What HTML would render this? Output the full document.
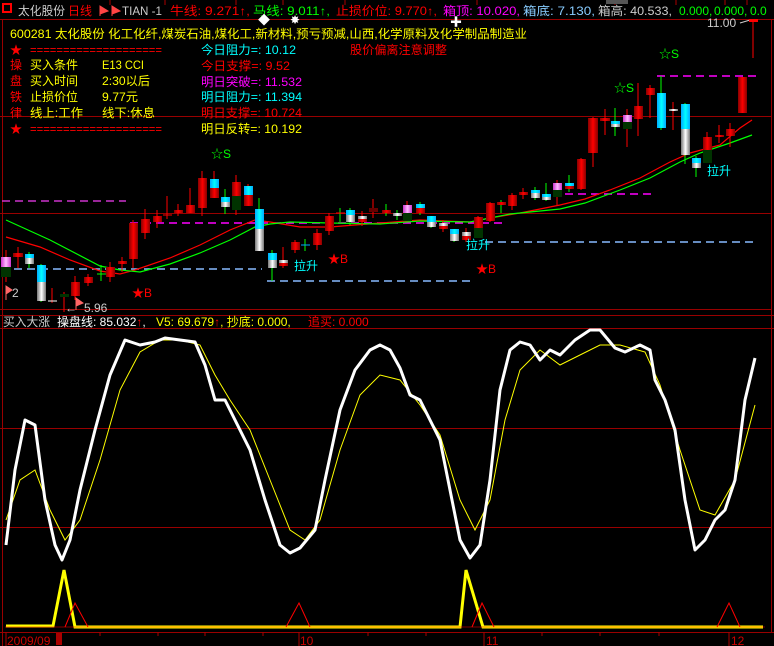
<!DOCTYPE html>
<html><head><meta charset="utf-8"><style>
html,body{margin:0;padding:0;background:#000;width:774px;height:646px;overflow:hidden}
svg{display:block}
text{font-family:"Liberation Sans","Noto Sans CJK SC",sans-serif;font-size:12px}
</style></head><body>
<svg width="774" height="646" viewBox="0 0 774 646" xmlns="http://www.w3.org/2000/svg">
<defs>
<linearGradient id="r" x1="0" x2="1"><stop offset="0" stop-color="#800"/><stop offset=".5" stop-color="#f00"/><stop offset="1" stop-color="#800"/></linearGradient>
<linearGradient id="c" x1="0" x2="1"><stop offset="0" stop-color="#0af"/><stop offset=".5" stop-color="#0ff"/><stop offset="1" stop-color="#0af"/></linearGradient>
<linearGradient id="w" x1="0" x2="1"><stop offset="0" stop-color="#777"/><stop offset=".5" stop-color="#fff"/><stop offset="1" stop-color="#777"/></linearGradient>
<linearGradient id="p" x1="0" x2="1"><stop offset="0" stop-color="#c3c"/><stop offset=".5" stop-color="#fbf"/><stop offset="1" stop-color="#c3c"/></linearGradient>
</defs>
<rect width="774" height="646" fill="#000"/>
<g stroke="#a00" stroke-width="1">
<line x1="110" y1="0" x2="110" y2="5"/><line x1="165" y1="0" x2="165" y2="5"/><line x1="236" y1="0" x2="236" y2="5"/><line x1="283" y1="0" x2="283" y2="5"/><line x1="345" y1="0" x2="345" y2="5"/><line x1="477" y1="0" x2="477" y2="5"/><line x1="615" y1="0" x2="615" y2="5"/><line x1="676" y1="0" x2="676" y2="5"/><line x1="725" y1="0" x2="725" y2="5"/><line x1="747" y1="0" x2="747" y2="5"/>
</g>
<rect x="606" y="0" width="22" height="4" fill="#555"/>
<g stroke="#900" stroke-width="1">
<line x1="0" y1="19.5" x2="774" y2="19.5"/>
<line x1="0" y1="116.5" x2="771" y2="116.5"/>
<line x1="0" y1="213.5" x2="771" y2="213.5"/>
<line x1="0" y1="309.5" x2="771" y2="309.5"/>
<line x1="0" y1="315.5" x2="774" y2="315.5"/>
<line x1="0" y1="328.5" x2="774" y2="328.5"/>
<line x1="0" y1="428.5" x2="771" y2="428.5"/>
<line x1="0" y1="527.5" x2="771" y2="527.5"/>
<line x1="0" y1="632.5" x2="774" y2="632.5"/>
<line x1="2.5" y1="19" x2="2.5" y2="646"/>
<line x1="771.5" y1="19" x2="771.5" y2="632"/>
</g>
<rect x="3" y="4" width="8" height="8" fill="none" stroke="#f00" stroke-width="2"/>
<text x="18" y="15" font-size="13" fill="#ccc" textLength="47" lengthAdjust="spacingAndGlyphs">太化股份</text>
<text x="68" y="15" font-size="13" fill="#f00" textLength="24" lengthAdjust="spacingAndGlyphs">日线</text>
<path d="M100 6 L100 16 M100 6 L108 11 L100 14Z M112 6 L112 16 M112 6 L120 11 L112 14Z" fill="#f44" stroke="#f44"/>
<text x="122" y="15" fill="#ccc" font-size="13" textLength="40" lengthAdjust="spacingAndGlyphs">TIAN -1</text>
<text x="170" y="15" font-size="13" fill="#f00" textLength="80" lengthAdjust="spacingAndGlyphs">牛线: 9.271↑,</text>
<text x="253" y="15" font-size="13" fill="#0f0" textLength="77" lengthAdjust="spacingAndGlyphs">马线: 9.011↑,</text>
<text x="336" y="15" font-size="13" fill="#f00" textLength="101" lengthAdjust="spacingAndGlyphs">止损价位: 9.770↑,</text>
<text x="443" y="15" font-size="13" fill="#f0f" textLength="77" lengthAdjust="spacingAndGlyphs">箱顶: 10.020,</text>
<text x="523" y="15" font-size="13" fill="#8cf" textLength="72" lengthAdjust="spacingAndGlyphs">箱底: 7.130,</text>
<text x="598" y="15" font-size="13" fill="#ccc" textLength="74" lengthAdjust="spacingAndGlyphs">箱高: 40.533,</text>
<text x="679" y="15" font-size="13" fill="#0f0">0.000,</text>
<text x="714" y="15" font-size="13" fill="#0f0">0.000,</text>
<text x="750" y="15" font-size="13" fill="#0f0">0.0</text>
<text x="258" y="24" fill="#fff" font-size="10">◆</text><text x="290" y="24" fill="#fff" font-size="10">✸</text><text x="450" y="26" fill="#fff" font-size="12">✚</text>
<text x="10" y="38" fill="#ff0" font-size="13" textLength="517" lengthAdjust="spacingAndGlyphs">600281 太化股份 化工化纤,煤炭石油,煤化工,新材料,预亏预减,山西,化学原料及化学制品制造业</text>
<text x="10" y="54" fill="#f00">★</text><text x="30" y="54" fill="#f00" textLength="132" lengthAdjust="spacingAndGlyphs">====================</text>
<text x="10" y="69" fill="#f00" font-size="13">操</text><text x="30" y="69" fill="#ff0" font-size="13">买入条件</text><text x="102" y="69" fill="#ff0" font-size="13" textLength="42" lengthAdjust="spacingAndGlyphs">E13 CCI</text>
<text x="10" y="85" fill="#f00" font-size="13">盘</text><text x="30" y="85" fill="#ff0" font-size="13">买入时间</text><text x="102" y="85" fill="#ff0" font-size="13" textLength="48" lengthAdjust="spacingAndGlyphs">2:30以后</text>
<text x="10" y="101" fill="#f00" font-size="13">铁</text><text x="30" y="101" fill="#ff0" font-size="13">止损价位</text><text x="102" y="101" fill="#ff0" font-size="13" textLength="36" lengthAdjust="spacingAndGlyphs">9.77元</text>
<text x="10" y="117" fill="#f00" font-size="13">律</text><text x="30" y="117" fill="#ff0" font-size="13" textLength="53" lengthAdjust="spacingAndGlyphs">线上:工作</text><text x="102" y="117" fill="#ff0" font-size="13" textLength="53" lengthAdjust="spacingAndGlyphs">线下:休息</text>
<text x="10" y="133" fill="#f00">★</text><text x="30" y="133" fill="#f00" textLength="132" lengthAdjust="spacingAndGlyphs">====================</text>
<text x="201" y="54" fill="#0ff" font-size="13" textLength="95" lengthAdjust="spacingAndGlyphs">今日阻力=: 10.12</text>
<text x="201" y="70" fill="#f00" font-size="13" textLength="89" lengthAdjust="spacingAndGlyphs">今日支撑=: 9.52</text>
<text x="201" y="86" fill="#f0f" font-size="13" textLength="101" lengthAdjust="spacingAndGlyphs">明日突破=: 11.532</text>
<text x="201" y="101" fill="#0ff" font-size="13" textLength="101" lengthAdjust="spacingAndGlyphs">明日阻力=: 11.394</text>
<text x="201" y="117" fill="#f00" font-size="13" textLength="101" lengthAdjust="spacingAndGlyphs">明日支撑=: 10.724</text>
<text x="201" y="133" fill="#ff0" font-size="13" textLength="101" lengthAdjust="spacingAndGlyphs">明日反转=: 10.192</text>
<text x="350" y="54" fill="#f00" font-size="13" textLength="97" lengthAdjust="spacingAndGlyphs">股价偏离注意调整</text>
<text x="707" y="27" fill="#ccc" font-size="13">11.00</text><line x1="740" y1="23" x2="750" y2="20" stroke="#ccc"/>
<g stroke-width="1.5" stroke-dasharray="8,5" fill="none">
<line x1="2" y1="201" x2="126" y2="201" stroke="#c3c"/>
<line x1="130" y1="223" x2="505" y2="223" stroke="#f0f"/>
<line x1="14" y1="269" x2="262" y2="269" stroke="#8bf"/>
<line x1="267" y1="281" x2="470" y2="281" stroke="#8bf"/>
<line x1="485" y1="242" x2="757" y2="242" stroke="#8bf"/>
<line x1="565" y1="194" x2="655" y2="194" stroke="#f0f"/>
<line x1="657" y1="76" x2="757" y2="76" stroke="#f0f"/>
</g>
<polyline fill="none" stroke="#f00" stroke-width="1.2" points="6,237 40,247 70,260 100,271 120,274 135,270 170,258 200,245 230,230 255,220 270,222 300,227 330,227 380,223 420,220 470,222 490,218 520,213 560,205 585,199 610,190 640,178 670,162 690,153 720,145 740,128 752,120"/>
<polyline fill="none" stroke="#0f0" stroke-width="1.2" points="6,220 50,240 100,266 120,270 140,272 170,264 200,253 230,240 255,227 270,224 290,222 330,223 380,224 420,221 470,222 510,214 560,209 585,203 620,190 650,178 680,162 700,153 730,143 752,135"/>
<g stroke-width="1">
<line x1="6" y1="250" x2="6" y2="282" stroke="#f00"/><rect x="1" y="257" width="10" height="10" fill="url(#p)"/><rect x="1" y="267" width="10" height="10" fill="#030"/>
<line x1="18" y1="247" x2="18" y2="268" stroke="#f00"/><rect x="13" y="253" width="10" height="4" fill="url(#r)"/>
<line x1="29" y1="252" x2="29" y2="268" stroke="#0f0"/><rect x="25" y="254" width="9" height="4" fill="url(#c)"/><rect x="25" y="258" width="9" height="6" fill="url(#w)"/>
<line x1="41" y1="264" x2="41" y2="302" stroke="#0f0"/><rect x="37" y="265" width="9" height="17" fill="url(#c)"/><rect x="37" y="282" width="9" height="19" fill="url(#w)"/>
<line x1="52" y1="288" x2="52" y2="303" stroke="#f00"/><line x1="48" y1="301" x2="57" y2="301" stroke="#fff"/>
<line x1="64" y1="292" x2="64" y2="312" stroke="#f00"/><rect x="60" y="294" width="9" height="3" fill="#030"/>
<line x1="75" y1="276" x2="75" y2="300" stroke="#f00"/><rect x="71" y="282" width="9" height="14" fill="url(#r)"/>
<line x1="88" y1="274" x2="88" y2="286" stroke="#f00"/><rect x="84" y="277" width="9" height="6" fill="url(#r)"/>
<line x1="101" y1="265" x2="101" y2="281" stroke="#0f0"/><line x1="97" y1="274" x2="106" y2="274" stroke="#0f0"/>
<line x1="110" y1="262" x2="110" y2="282" stroke="#f00"/><rect x="106" y="267" width="9" height="10" fill="url(#r)"/>
<line x1="122" y1="257" x2="122" y2="272" stroke="#f00"/><rect x="118" y="261" width="9" height="3" fill="url(#r)"/>
<line x1="133" y1="220" x2="133" y2="268" stroke="#f00"/><rect x="129" y="223" width="9" height="36" fill="url(#r)"/>
<line x1="145" y1="209" x2="145" y2="239" stroke="#f00"/><rect x="141" y="219" width="9" height="14" fill="url(#r)"/>
<line x1="157" y1="210" x2="157" y2="228" stroke="#f00"/><rect x="153" y="216" width="9" height="6" fill="url(#r)"/>
<line x1="167" y1="196" x2="167" y2="219" stroke="#f00"/><line x1="163" y1="215" x2="172" y2="215" stroke="#f00"/>
<line x1="178" y1="204" x2="178" y2="216" stroke="#f00"/><rect x="174" y="210" width="9" height="3" fill="url(#r)"/>
<line x1="190" y1="188" x2="190" y2="213" stroke="#f00"/><rect x="186" y="205" width="9" height="8" fill="url(#r)"/>
<line x1="202" y1="171" x2="202" y2="216" stroke="#f00"/><rect x="198" y="178" width="9" height="30" fill="url(#r)"/>
<line x1="214" y1="171" x2="214" y2="198" stroke="#f00"/><rect x="210" y="179" width="9" height="9" fill="url(#c)"/><rect x="210" y="188" width="9" height="10" fill="url(#r)"/>
<line x1="225" y1="189" x2="225" y2="214" stroke="#0f0"/><rect x="221" y="197" width="9" height="5" fill="url(#c)"/><rect x="221" y="202" width="9" height="5" fill="url(#w)"/>
<line x1="236" y1="175" x2="236" y2="215" stroke="#f00"/><rect x="232" y="182" width="9" height="14" fill="url(#r)"/><rect x="232" y="196" width="9" height="14" fill="#030"/>
<line x1="248" y1="184" x2="248" y2="206" stroke="#f00"/><rect x="244" y="186" width="9" height="9" fill="url(#c)"/><rect x="244" y="195" width="9" height="11" fill="url(#r)"/>
<line x1="259" y1="198" x2="259" y2="251" stroke="#0f0"/><rect x="255" y="209" width="9" height="20" fill="url(#c)"/><rect x="255" y="229" width="9" height="22" fill="url(#w)"/>
<line x1="272" y1="250" x2="272" y2="281" stroke="#0f0"/><rect x="268" y="253" width="9" height="7" fill="url(#c)"/><rect x="268" y="260" width="9" height="8" fill="url(#w)"/>
<line x1="283" y1="247" x2="283" y2="268" stroke="#f00"/><rect x="279" y="260" width="9" height="3" fill="url(#w)"/><rect x="279" y="263" width="9" height="3" fill="url(#r)"/>
<line x1="295" y1="240" x2="295" y2="253" stroke="#f00"/><rect x="291" y="242" width="9" height="8" fill="url(#r)"/>
<line x1="305" y1="239" x2="305" y2="251" stroke="#0f0"/><line x1="301" y1="245" x2="310" y2="245" stroke="#0af"/>
<line x1="317" y1="229" x2="317" y2="250" stroke="#f00"/><rect x="313" y="233" width="9" height="12" fill="url(#r)"/>
<line x1="329" y1="213" x2="329" y2="235" stroke="#f00"/><rect x="325" y="216" width="9" height="15" fill="url(#r)"/>
<line x1="340" y1="208" x2="340" y2="222" stroke="#0f0"/><line x1="336" y1="213" x2="345" y2="213" stroke="#f00"/>
<line x1="350" y1="208" x2="350" y2="225" stroke="#0f0"/><rect x="346" y="210" width="9" height="5" fill="url(#c)"/><rect x="346" y="215" width="9" height="7" fill="url(#w)"/>
<line x1="362" y1="211" x2="362" y2="226" stroke="#f00"/><rect x="358" y="216" width="9" height="3" fill="url(#w)"/><rect x="358" y="219" width="9" height="3" fill="url(#r)"/>
<line x1="373" y1="199" x2="373" y2="218" stroke="#f00"/><rect x="369" y="208" width="9" height="4" fill="#600"/>
<line x1="386" y1="204" x2="386" y2="216" stroke="#0f0"/><rect x="382" y="210" width="9" height="3" fill="url(#r)"/>
<line x1="397" y1="210" x2="397" y2="220" stroke="#0f0"/><rect x="393" y="213" width="9" height="3" fill="url(#w)"/>
<line x1="407" y1="201" x2="407" y2="221" stroke="#f00"/><rect x="403" y="205" width="9" height="8" fill="url(#p)"/><rect x="403" y="213" width="9" height="8" fill="#030"/>
<line x1="420" y1="202" x2="420" y2="215" stroke="#0f0"/><rect x="416" y="204" width="9" height="4" fill="url(#c)"/><rect x="416" y="208" width="9" height="5" fill="url(#r)"/>
<line x1="431" y1="216" x2="431" y2="228" stroke="#0f0"/><rect x="427" y="216" width="9" height="6" fill="url(#c)"/><rect x="427" y="222" width="9" height="5" fill="url(#w)"/>
<line x1="443" y1="220" x2="443" y2="232" stroke="#f00"/><rect x="439" y="223" width="9" height="3" fill="url(#w)"/><rect x="439" y="226" width="9" height="3" fill="url(#r)"/>
<line x1="454" y1="229" x2="454" y2="242" stroke="#0f0"/><rect x="450" y="229" width="9" height="5" fill="url(#c)"/><rect x="450" y="234" width="9" height="7" fill="url(#w)"/>
<line x1="466" y1="228" x2="466" y2="242" stroke="#f00"/><rect x="462" y="232" width="9" height="4" fill="url(#w)"/><rect x="462" y="236" width="9" height="4" fill="url(#r)"/>
<line x1="478" y1="216" x2="478" y2="238" stroke="#f00"/><rect x="474" y="217" width="9" height="11" fill="url(#r)"/><rect x="474" y="228" width="9" height="10" fill="#030"/>
<line x1="490" y1="202" x2="490" y2="222" stroke="#f00"/><rect x="486" y="203" width="9" height="18" fill="url(#r)"/>
<line x1="501" y1="200" x2="501" y2="213" stroke="#0f0"/><rect x="497" y="202" width="9" height="3" fill="url(#r)"/>
<line x1="512" y1="193" x2="512" y2="210" stroke="#f00"/><rect x="508" y="195" width="9" height="11" fill="url(#r)"/>
<line x1="523" y1="188" x2="523" y2="199" stroke="#f00"/><rect x="519" y="192" width="9" height="3" fill="url(#r)"/>
<line x1="535" y1="187" x2="535" y2="200" stroke="#0f0"/><rect x="531" y="190" width="9" height="3" fill="url(#c)"/><rect x="531" y="193" width="9" height="5" fill="url(#w)"/>
<line x1="546" y1="183" x2="546" y2="201" stroke="#0f0"/><rect x="542" y="194" width="9" height="3" fill="url(#c)"/><rect x="542" y="197" width="9" height="3" fill="url(#w)"/>
<line x1="557" y1="180" x2="557" y2="206" stroke="#f00"/><rect x="553" y="183" width="9" height="7" fill="url(#p)"/><rect x="553" y="190" width="9" height="7" fill="#030"/>
<line x1="569" y1="175" x2="569" y2="192" stroke="#0f0"/><rect x="565" y="183" width="9" height="3" fill="url(#c)"/><rect x="565" y="186" width="9" height="3" fill="url(#r)"/>
<line x1="581" y1="158" x2="581" y2="190" stroke="#f00"/><rect x="577" y="159" width="9" height="30" fill="url(#r)"/>
<line x1="593" y1="117" x2="593" y2="167" stroke="#f00"/><rect x="588" y="118" width="10" height="35" fill="url(#r)"/>
<line x1="605" y1="109" x2="605" y2="135" stroke="#f00"/><rect x="600" y="118" width="10" height="3" fill="url(#r)"/>
<line x1="615" y1="108" x2="615" y2="136" stroke="#0f0"/><rect x="611" y="121" width="9" height="3" fill="url(#c)"/><rect x="611" y="124" width="9" height="3" fill="url(#w)"/>
<line x1="627" y1="109" x2="627" y2="147" stroke="#f00"/><rect x="623" y="115" width="9" height="7" fill="url(#p)"/><rect x="623" y="122" width="9" height="7" fill="#030"/>
<line x1="638" y1="83" x2="638" y2="136" stroke="#f00"/><rect x="634" y="106" width="9" height="13" fill="url(#r)"/>
<line x1="650" y1="85" x2="650" y2="118" stroke="#f00"/><rect x="646" y="88" width="9" height="7" fill="url(#r)"/>
<line x1="661" y1="76" x2="661" y2="130" stroke="#0f0"/><rect x="657" y="93" width="9" height="35" fill="url(#c)"/>
<line x1="673" y1="102" x2="673" y2="130" stroke="#f00"/><rect x="669" y="109" width="9" height="2" fill="url(#w)"/>
<line x1="685" y1="103" x2="685" y2="164" stroke="#0f0"/><rect x="681" y="104" width="9" height="25" fill="url(#c)"/><rect x="681" y="129" width="9" height="26" fill="url(#w)"/>
<line x1="696" y1="156" x2="696" y2="177" stroke="#0f0"/><rect x="692" y="158" width="9" height="5" fill="url(#c)"/><rect x="692" y="163" width="9" height="5" fill="url(#w)"/>
<line x1="707" y1="132" x2="707" y2="163" stroke="#f00"/><rect x="703" y="137" width="9" height="13" fill="url(#r)"/><rect x="703" y="150" width="9" height="13" fill="#030"/>
<line x1="719" y1="125" x2="719" y2="143" stroke="#f00"/><rect x="715" y="135" width="9" height="2" fill="url(#r)"/>
<line x1="730" y1="123" x2="730" y2="147" stroke="#f00"/><rect x="726" y="129" width="9" height="7" fill="url(#r)"/>
<rect x="738" y="77" width="9" height="36" fill="url(#r)"/>
<line x1="753" y1="20" x2="753" y2="58" stroke="#f00"/><rect x="749" y="19" width="9" height="3" fill="#f00"/>
</g>
<text x="211" y="158" fill="#0f0" font-size="13">☆S</text>
<text x="614" y="92" fill="#0f0" font-size="13">☆S</text>
<text x="659" y="58" fill="#0f0" font-size="13">☆S</text>
<text x="132" y="297" fill="#f00" font-size="13">★B</text>
<text x="328" y="263" fill="#f00" font-size="13">★B</text>
<text x="476" y="273" fill="#f00" font-size="13">★B</text>
<text x="294" y="270" fill="#0ff">拉升</text>
<text x="466" y="249" fill="#0ff">拉升</text>
<text x="707" y="175" fill="#0ff">拉升</text>
<path d="M6 286 L6 300 M6 286 L12 290 L6 294Z" fill="#f66" stroke="#f66"/><text x="12" y="297" fill="#ccc">2</text>
<text x="65" y="312" fill="#ccc">←</text><path d="M76 298 L76 310 M76 298 L83 303 L76 306Z" fill="#f66" stroke="#f66"/><text x="84" y="312" fill="#ccc">5.96</text>
<text x="3" y="326" fill="#ccc" font-size="13" textLength="47" lengthAdjust="spacingAndGlyphs">买入大涨</text>
<text x="57" y="326" fill="#fff" font-size="13">操盘线: 85.032<tspan fill="#f00">↑</tspan>,</text>
<text x="156" y="326" fill="#ff0" font-size="13">V5: 69.679<tspan fill="#f00">↑</tspan>, 抄底: 0.000,</text>
<text x="308" y="326" fill="#f00" font-size="13">追买: 0.000</text>
<polyline fill="none" stroke="#ff0" stroke-width="1" points="6,520 20,480 35,470 50,510 65,540 80,520 100,460 120,390 140,352 160,340 180,340 200,345 215,375 230,400 250,430 270,480 290,530 305,540 320,520 340,450 360,395 380,375 400,380 420,405 440,435 460,500 475,530 490,500 505,420 520,370 540,350 560,365 580,355 600,345 620,345 645,352 660,385 680,450 700,510 715,515 735,480 755,405"/>
<polyline fill="none" stroke="#fff" stroke-width="3" stroke-linejoin="round" points="6,545 15,470 25,420 35,425 45,500 55,545 62,560 70,540 80,490 95,430 110,375 125,340 140,345 155,342 165,338 180,340 195,342 205,365 215,400 225,400 235,420 250,450 265,500 280,545 290,553 300,548 315,530 325,480 340,410 355,370 370,350 380,345 390,350 400,368 410,395 420,400 430,420 440,440 450,490 460,540 470,558 480,545 490,480 500,390 510,350 520,342 530,345 540,360 550,350 560,355 575,340 590,330 600,330 615,348 625,352 640,345 650,350 655,380 665,400 675,430 685,500 695,550 705,540 715,520 725,510 735,480 745,400 755,358"/>
<polyline fill="none" stroke="#ff0" stroke-width="3" points="6,626 53,626 64,570 75,627 460,627 466,570 483,627 763,627"/>
<g fill="none" stroke="#f00" stroke-width="1">
<polyline points="5,627 765,627" stroke-width="0.6"/>
<polyline points="65,627 75,603 88,627"/>
<polyline points="286,627 299,603 310,627"/>
<polyline points="472,627 482,603 494,627"/>
<polyline points="717,627 729,603 740,627"/>
</g>
<g stroke="#a00"><line x1="6" y1="632" x2="6" y2="646"/><line x1="299" y1="632" x2="299" y2="646"/><line x1="484" y1="632" x2="484" y2="646"/><line x1="729" y1="632" x2="729" y2="646"/>
<line x1="100" y1="632" x2="100" y2="636"/><line x1="158" y1="632" x2="158" y2="636"/><line x1="205" y1="632" x2="205" y2="636"/><line x1="263" y1="632" x2="263" y2="636"/><line x1="368" y1="632" x2="368" y2="636"/><line x1="426" y1="632" x2="426" y2="636"/><line x1="542" y1="632" x2="542" y2="636"/><line x1="600" y1="632" x2="600" y2="636"/><line x1="659" y1="632" x2="659" y2="636"/></g>
<rect x="56" y="633" width="6" height="12" fill="#a00"/>
<text x="7" y="645" fill="#c00" font-size="13">2009/09</text>
<text x="300" y="645" fill="#c00" font-size="13">10</text>
<text x="486" y="645" fill="#c00" font-size="13">11</text>
<text x="731" y="645" fill="#c00" font-size="13">12</text>
</svg>
</body></html>
